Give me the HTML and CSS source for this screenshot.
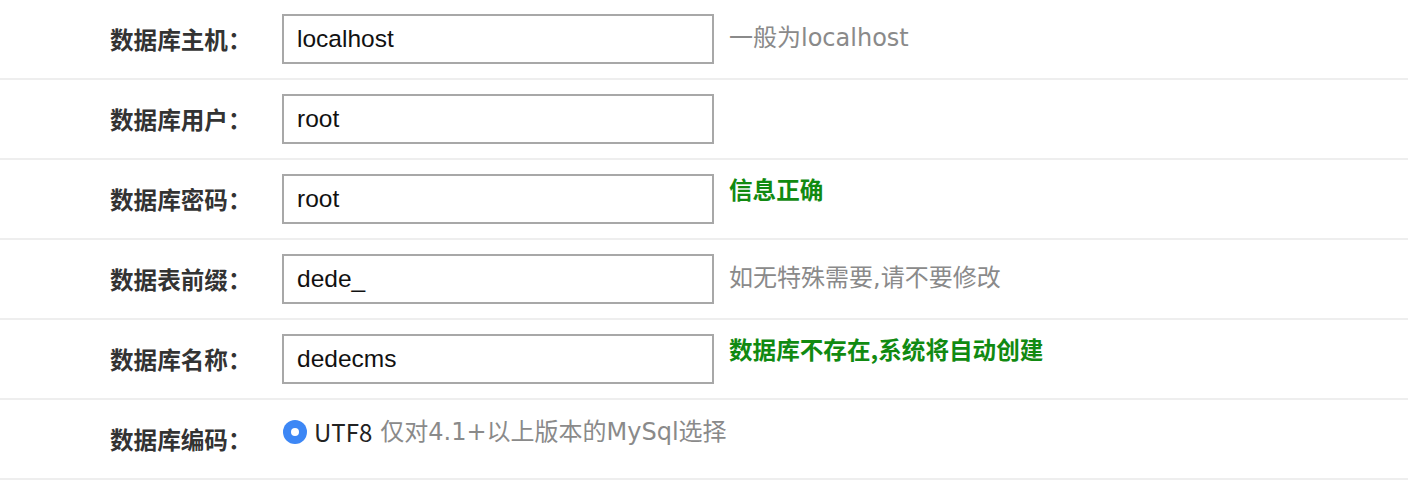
FILE: index.html
```html
<!DOCTYPE html>
<html lang="zh-CN">
<head>
<meta charset="utf-8">
<title>数据库设置</title>
<link rel="stylesheet" href="styles.css">
</head>
<body>
<div class="form">
  <div class="row">
    <div class="label">数据库主机：</div>
    <input class="field" type="text" value="localhost">
    <span class="hint">一般为localhost</span>
  </div>
  <div class="row">
    <div class="label">数据库用户：</div>
    <input class="field" type="text" value="root">
  </div>
  <div class="row">
    <div class="label">数据库密码：</div>
    <input class="field" type="text" value="root">
    <span class="hint ok">信息正确</span>
  </div>
  <div class="row">
    <div class="label">数据表前缀：</div>
    <input class="field" type="text" value="dede_">
    <span class="hint">如无特殊需要,请不要修改</span>
  </div>
  <div class="row">
    <div class="label">数据库名称：</div>
    <input class="field" type="text" value="dedecms">
    <span class="hint ok">数据库不存在,系统将自动创建</span>
  </div>
  <div class="row">
    <div class="label">数据库编码：</div>
    <div class="radio-group">
      <span class="radio"></span>
      <span class="radio-text">UTF8</span>
      <span class="radio-note">仅对4.1+以上版本的MySql选择</span>
    </div>
  </div>
</div>
</body>
</html>
```
FILE: styles.css
```css
html, body {
  margin: 0;
  padding: 0;
  background: #ffffff;
}

body {
  font-family: "Noto Sans CJK SC", "Liberation Sans", sans-serif;
  color: #333333;
}

.form {
  width: 1408px;
}

.row {
  display: flex;
  align-items: center;
  height: 78px;
  border-bottom: 2px solid #eeeeee;
}

.label {
  width: 282px;
  box-sizing: border-box;
  padding-left: 110px;
  font-size: 23.6px;
  font-weight: bold;
  color: #333333;
  line-height: 34px;
}

.field {
  width: 432px;
  height: 50px;
  box-sizing: border-box;
  margin: 0;
  border: 2px solid #a8a8a8;
  border-radius: 0;
  padding: 0 13px;
  font-family: "Liberation Sans", Arial, sans-serif;
  font-size: 24.5px;
  color: #111111;
  background: #ffffff;
  outline: none;
}

.hint {
  margin-left: 15px;
  margin-top: -3px;
  font-family: "DejaVu Sans", "Noto Sans CJK SC", sans-serif;
  font-size: 24px;
  line-height: 34px;
  color: #8a8a8a;
}

.hint.ok {
  align-self: flex-start;
  margin-top: 12px;
  font-family: "Noto Sans CJK SC", sans-serif;
  font-size: 23.6px;
  color: #118a11;
  font-weight: bold;
}

.radio-group {
  display: flex;
  align-items: center;
  margin-top: -14px;
  margin-left: 1px;
}

.radio {
  width: 24px;
  height: 24px;
  border-radius: 50%;
  background: #3d87f5;
  display: flex;
  align-items: center;
  justify-content: center;
}

.radio::after {
  content: "";
  width: 8px;
  height: 8px;
  border-radius: 50%;
  background: #ffffff;
}

.radio-text {
  margin-left: 7px;
  font-size: 24px;
  line-height: 34px;
  color: #222222;
}

.radio-note {
  margin-left: 8px;
  font-family: "DejaVu Sans", "Noto Sans CJK SC", sans-serif;
  font-size: 24px;
  line-height: 34px;
  color: #8a8a8a;
}
```
